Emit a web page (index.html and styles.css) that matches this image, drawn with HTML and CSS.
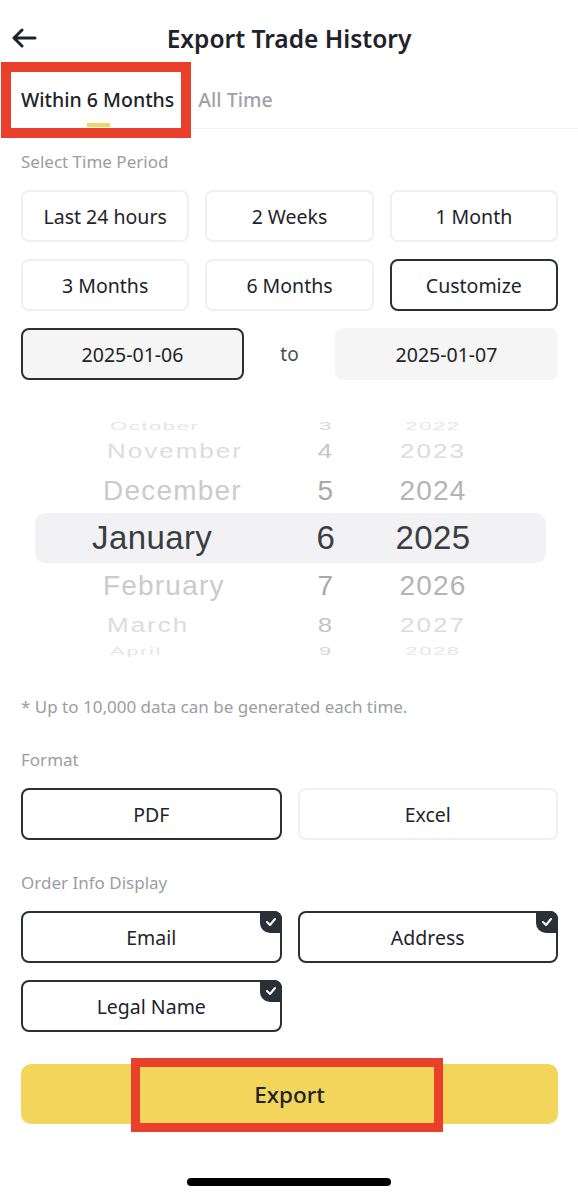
FILE: index.html
```html
<!DOCTYPE html>
<html lang="en">
<head>
    <meta charset="UTF-8">
    <meta name="viewport" content="width=device-width, initial-scale=1.0">
    <title>Export Trade History</title>
    <link rel="stylesheet" href="styles.css">
</head>
<body>
    <header class="topbar">
        <button class="back-btn" aria-label="Back">
            <svg width="26" height="20" viewBox="0 0 26 20">
                <path d="M24 10H3M11 2L3 10l8 8" fill="none" stroke="#1e2329" stroke-width="3" stroke-linecap="round" stroke-linejoin="round"/>
            </svg>
        </button>
        <h1>Export Trade History</h1>
    </header>

    <nav class="tabs">
        <div class="tab active">Within 6 Months</div>
        <div class="tab">All Time</div>
        <div class="mark mark-tab"></div>
    </nav>

    <main class="content">
        <p class="label">Select Time Period</p>
        <div class="period-grid">
            <button class="opt">Last 24 hours</button>
            <button class="opt">2 Weeks</button>
            <button class="opt">1 Month</button>
            <button class="opt">3 Months</button>
            <button class="opt">6 Months</button>
            <button class="opt selected">Customize</button>
        </div>

        <div class="date-range">
            <div class="date-box selected">2025-01-06</div>
            <span class="to">to</span>
            <div class="date-box">2025-01-07</div>
        </div>

        <section class="picker">
            <div class="wheel-row far3"><span class="m">October</span><span class="d">3</span><span class="y">2022</span></div>
            <div class="wheel-row far2"><span class="m">November</span><span class="d">4</span><span class="y">2023</span></div>
            <div class="wheel-row far1"><span class="m">December</span><span class="d">5</span><span class="y">2024</span></div>
            <div class="wheel-row current"><span class="m">January</span><span class="d">6</span><span class="y">2025</span></div>
            <div class="wheel-row far1 below"><span class="m">February</span><span class="d">7</span><span class="y">2026</span></div>
            <div class="wheel-row far2 below"><span class="m">March</span><span class="d">8</span><span class="y">2027</span></div>
            <div class="wheel-row far3 below"><span class="m">April</span><span class="d">9</span><span class="y">2028</span></div>
        </section>

        <p class="note">* Up to 10,000 data can be generated each time.</p>

        <p class="label">Format</p>
        <div class="two-col">
            <button class="opt selected">PDF</button>
            <button class="opt">Excel</button>
        </div>

        <p class="label">Order Info Display</p>
        <div class="two-col">
            <button class="opt selected check">Email</button>
            <button class="opt selected check">Address</button>
            <button class="opt selected check">Legal Name</button>
        </div>

        <div class="export-wrap">
            <button class="export-btn">Export</button>
            <div class="mark mark-export"></div>
        </div>
    </main>

    <div class="home-bar"></div>
</body>
</html>
```

FILE: styles.css
```css
body {
    font-family: "Noto Sans", Roboto, sans-serif;
    margin: 0;
    padding: 0;
    background-color: #fff;
    color: #1e2329;
    width: 578px;
}

button {
    font-family: inherit;
}

.topbar {
    height: 76px;
    display: flex;
    align-items: center;
    justify-content: center;
    position: relative;
}

.topbar h1 {
    margin: 0;
    font-size: 24.5px;
    font-weight: 600;
    color: #1e2329;
}

.back-btn {
    position: absolute;
    left: 11px;
    top: 28px;
    background: none;
    border: none;
    padding: 0;
}

.tabs {
    position: relative;
    display: flex;
    gap: 24px;
    height: 52px;
    padding-left: 21px;
    border-bottom: 1px solid #f3f3f3;
    align-items: center;
}

.tab {
    font-size: 19.5px;
    font-weight: 500;
    line-height: 26px;
    margin-top: -4px;
    color: #9ea1a6;
    position: relative;
}

.tab.active {
    color: #1e2329;
}

.tab.active::after {
    content: "";
    position: absolute;
    left: 66px;
    top: 36px;
    width: 23px;
    height: 4px;
    background-color: #f3d55b;
}

/* red annotation boxes drawn over the screenshot */
.mark {
    position: absolute;
    border: 10px solid #e8402a;
    pointer-events: none;
}

.mark-tab {
    left: 1px;
    top: -14px;
    width: 170px;
    height: 56px;
}

.content {
    padding: 0 20px 0 21px;
}

.label {
    margin: 0;
    font-size: 17px;
    color: #9a9da2;
    padding: 33px 0 18px;
    line-height: 20px;
}

.label:first-child {
    padding-top: 23px;
}

.period-grid {
    display: grid;
    grid-template-columns: repeat(3, 1fr);
    gap: 17px 16px;
}

.opt {
    height: 52px;
    background-color: #fff;
    border: 2px solid #eef0f2;
    border-radius: 8px;
    font-size: 19.5px;
    color: #1e2329;
    padding: 0;
    position: relative;
}

.opt.selected {
    border-color: #2b2f36;
}

.opt.check::after {
    content: "";
    position: absolute;
    top: -2px;
    right: -2px;
    width: 22px;
    height: 22px;
    background-color: #2b2f36;
    border-radius: 0 8px 0 10px;
    background-image: url("data:image/svg+xml,%3Csvg xmlns='http://www.w3.org/2000/svg' width='22' height='22'%3E%3Cpath d='M7 11l3 3 5-6' fill='none' stroke='%23fff' stroke-width='2' stroke-linecap='round' stroke-linejoin='round'/%3E%3C/svg%3E");
}

.date-range {
    display: flex;
    align-items: center;
    margin-top: 17px;
}

.date-box {
    width: 223px;
    height: 52px;
    box-sizing: border-box;
    background-color: #f5f5f5;
    border: 2px solid #f5f5f5;
    border-radius: 8px;
    display: flex;
    align-items: center;
    justify-content: center;
    font-size: 19.5px;
}

.date-box.selected {
    border-color: #2b2f36;
}

.to {
    flex: 1;
    text-align: center;
    font-size: 19px;
    color: #474d57;
}

.picker {
    margin: 35px 12px 0 14px;
    font-family: "Liberation Sans", Arial, sans-serif;
}

.wheel-row {
    display: grid;
    grid-template-columns: 255px 72px 142px 1fr;
    align-items: center;
    height: 44px;
    font-size: 28px;
    letter-spacing: 1.2px;
    color: #cbcbcb;
}

.wheel-row .m {
    padding-left: 68px;
}

.wheel-row .d,
.wheel-row .y {
    text-align: center;
}

.wheel-row .d {
    color: #a9a9a9;
}

.wheel-row.far1 .y {
    color: #b4b4b4;
}

.wheel-row.far1.below {
    height: 46px;
}

.wheel-row.far2 {
    height: 36px;
    font-size: 26px;
    letter-spacing: 2px;
    color: #dcdcdc;
    transform: scaleY(0.8);
}

.wheel-row.far2 .m {
    padding-left: 72px;
}

.wheel-row.far2.below {
    height: 32px;
}

.wheel-row.far2 .d {
    color: #c4c4c4;
}

.wheel-row.far3 {
    height: 18px;
    font-size: 22px;
    letter-spacing: 1.6px;
    color: #e6e6e6;
    transform: scaleY(0.5);
}

.wheel-row.far3 .m {
    padding-left: 75px;
}

.wheel-row.far3.below {
    height: 16px;
}

.wheel-row.far3 .d {
    color: #d8d8d8;
}

.wheel-row.current {
    height: 50px;
    font-size: 33px;
    letter-spacing: 0.4px;
    color: #3a3d42;
    background-color: #f2f2f4;
    border-radius: 10px;
}

.wheel-row.current .m {
    padding-left: 57px;
}

.wheel-row.current .d {
    color: #3a3d42;
}

.note {
    margin: 40px 0 0;
    font-size: 17px;
    color: #9a9da2;
    line-height: 20px;
}

.two-col {
    display: grid;
    grid-template-columns: 1fr 1fr;
    gap: 17px 16px;
}

.export-wrap {
    position: relative;
    margin-top: 32px;
}

.export-btn {
    width: 100%;
    height: 60px;
    border: none;
    border-radius: 10px;
    background-color: #f3d55b;
    color: #1e2329;
    font-size: 22.5px;
    font-weight: 500;
}

.mark-export {
    left: 110px;
    top: -6px;
    width: 294px;
    height: 56px;
    border-width: 9px;
}

.home-bar {
    width: 204px;
    height: 8px;
    background-color: #000;
    border-radius: 4px;
    margin: 54px auto 0;
}
```
